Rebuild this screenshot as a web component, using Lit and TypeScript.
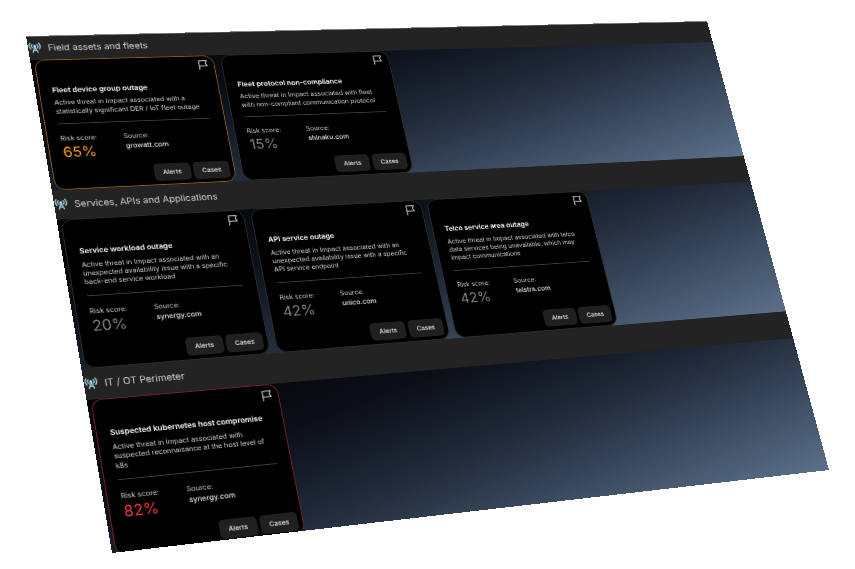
import { LitElement, html, css, svg } from "lit";
import { customElement } from "lit/decorators.js";

const W = 864;
const H = 600;
const QUAD = [[26, 36], [707, 21], [829, 470], [112, 553]];

function planeMatrix(): string {
  const [[x0, y0], [x1, y1], [x2, y2], [x3, y3]] = QUAD;
  const dx1 = x1 - x2, dx2 = x3 - x2, sx = x0 - x1 + x2 - x3;
  const dy1 = y1 - y2, dy2 = y3 - y2, sy = y0 - y1 + y2 - y3;
  const den = dx1 * dy2 - dx2 * dy1;
  const g = (sx * dy2 - dx2 * sy) / den;
  const h = (dx1 * sy - sx * dy1) / den;
  const a = x1 - x0 + g * x1, b = x3 - x0 + h * x3, c = x0;
  const d = y1 - y0 + g * y1, e = y3 - y0 + h * y3, f = y0;
  return `matrix3d(${[a / W, d / W, 0, g / W, b / H, e / H, 0, h / H, 0, 0, 1, 0, c, f, 0, 1].join(",")})`;
}

interface Card { title: string; lines: string[]; score: string; source: string; tone: "warn" | "mute" | "crit"; }
interface Section { name: string; tall: "a" | "b" | "c"; cards: Card[]; }

const SECTIONS: Section[] = [
  { name: "Field assets and fleets", tall: "a", cards: [
    { title: "Fleet device group outage", lines: ["Active threat in Impact associated with a", "statistically significant DER / IoT fleet outage"], score: "65%", source: "growatt.com", tone: "warn" },
    { title: "Fleet protocol non-compliance", lines: ["Active threat in Impact associated with fleet", "with non-compliant communication protocol"], score: "15%", source: "shinaku.com", tone: "mute" },
  ] },
  { name: "Services, APIs and Applications", tall: "b", cards: [
    { title: "Service workload outage", lines: ["Active threat in Impact associated with an", "unexpected availability issue with a specific", "back-end service workload"], score: "20%", source: "synergy.com", tone: "mute" },
    { title: "API service outage", lines: ["Active threat in Impact associated with an", "unexpected availability issue with a specific", "API service endpoint"], score: "42%", source: "unico.com", tone: "mute" },
    { title: "Telco service area outage", lines: ["Active threat in Impact associated with telco", "data services being unavailable, which may", "impact communications"], score: "42%", source: "telstra.com", tone: "mute" },
  ] },
  { name: "IT / OT Perimeter", tall: "c", cards: [
    { title: "Suspected kubernetes host compromise", lines: ["Active threat in Impact associated with", "suspected reconnaisance at the host level of", "k8s"], score: "82%", source: "synergy.com", tone: "crit" },
  ] },
];

const tower = svg`<svg class="tower" viewBox="0 0 24 24" fill="none" stroke="currentColor" stroke-width="2.2" stroke-linecap="round" stroke-linejoin="round">
  <circle cx="12" cy="8" r="1.6" fill="currentColor"/>
  <path d="M12 9 7.5 21M12 9l4.5 12M9 17h6"/>
  <path d="M7.5 4.5a6 6 0 0 0 0 7M16.5 4.5a6 6 0 0 1 0 7M4 2a10 10 0 0 0 0 12M20 2a10 10 0 0 1 0 12"/>
</svg>`;

const flag = svg`<svg class="flag" viewBox="0 0 24 24" fill="none" stroke="currentColor" stroke-width="1.9" stroke-linejoin="round" stroke-linecap="round">
  <path d="M4 23V3h17l-3.5 6 3.5 6H4"/>
</svg>`;

@customElement("app-root")
export class AppRoot extends LitElement {
  static styles = css`
    :host { display: block; width: 855px; height: 569px; overflow: hidden; background: #fff; font-family: Inter, "Liberation Sans", sans-serif; text-rendering: geometricPrecision; }
    .lens { width: 855px; height: 569px; overflow: hidden; filter: blur(0.3px); }
    .plane { width: 864px; height: 600px; transform-origin: 0 0; overflow: hidden; }
    .sheet { zoom: 0.6; width: 1440px; height: 1000px; overflow: hidden; display: flex; flex-direction: column; background: #222; border-top: 2px solid #8a8a8a; box-sizing: border-box; }
    .section { display: flex; flex-direction: column; flex: none; overflow: hidden; }
    .section.a { height: 313px; }
    .section.b { height: 347px; }
    .section.c { height: 338px; }
    .head { flex: none; display: flex; align-items: center; gap: 11px; background: #232323; color: #cfcfcf; font-size: 18px; }
    .a .head { height: 48px; }
    .b .head, .c .head { height: 59px; }
    .tower { width: 26px; height: 24px; color: #a9dcf2; flex: none; }
    .body { flex: 1; min-height: 0; display: flex; gap: 13px; padding-left: 7px; background: linear-gradient(165deg, #020305 0%, #0b0f18 28%, #222c3c 55%, #5b708b 100%); }
    .card { position: relative; flex: none; width: 343px; box-sizing: border-box; background: #000; border: 1px solid #2b2b2b; border-radius: 20px; display: flex; flex-direction: column; padding: 55px 8px 7px 23px; color: #fff; }
    .c .card { height: 284px; }
    .card.warn { border-color: #8c5c1c; }
    .card.crit { border-color: #7b1d26; border-bottom: none; }
    .flag { position: absolute; top: 7px; right: 10px; width: 24px; height: 22px; color: #e2e2e2; }
    .title { font-size: 14.3px; line-height: 19px; font-weight: 600; white-space: nowrap; color: #fafafa; }
    .desc { font-size: 13px; line-height: 17.4px; color: #cfcfcf; white-space: nowrap; padding-top: 5px; }
    .line { display: block; }
    .rule { height: 1px; background: #3e3e3e; margin: 16px 19px 0 0; flex: none; }
    .meta { display: flex; margin-top: 23px; }
    .risk { width: 118px; flex: none; }
    .label { font-size: 13.2px; line-height: 16px; color: #c6c6c6; }
    .value { font-size: 28px; line-height: 30px; margin-left: 1px; margin-top: 6px; }
    .warn .value { color: #f99f1e; }
    .mute .value { color: #828282; }
    .crit .value { color: #fa3742; }
    .src { font-size: 13.6px; line-height: 17px; color: #e0e0e0; margin-left: 1px; margin-top: 2px; font-weight: 500; }
    .actions { margin-top: auto; display: flex; justify-content: flex-end; gap: 6px; }
    .btn { width: 70px; height: 35px; display: flex; align-items: center; justify-content: center; border-radius: 8px; background: #202020; color: #e2e2e2; font-size: 12.5px; font-weight: 500; }
  `;

  private renderCard(c: Card) {
    return html`<div class="card ${c.tone}">
      ${flag}
      <div class="title">${c.title}</div>
      <div class="desc">${c.lines.map((l) => html`<span class="line">${l}</span>`)}</div>
      <div class="rule"></div>
      <div class="meta">
        <div class="risk"><div class="label">Risk score:</div><div class="value">${c.score}</div></div>
        <div><div class="label">Source:</div><div class="src">${c.source}</div></div>
      </div>
      <div class="actions"><div class="btn">Alerts</div><div class="btn">Cases</div></div>
    </div>`;
  }

  render() {
    return html`<div class="lens"><div class="plane" style="transform:${planeMatrix()}"><div class="sheet">
      ${SECTIONS.map((s) => html`<section class="section ${s.tall}">
        <div class="head">${tower}<span>${s.name}</span></div>
        <div class="body">${s.cards.map((c) => this.renderCard(c))}</div>
      </section>`)}
    </div></div></div>`;
  }
}
